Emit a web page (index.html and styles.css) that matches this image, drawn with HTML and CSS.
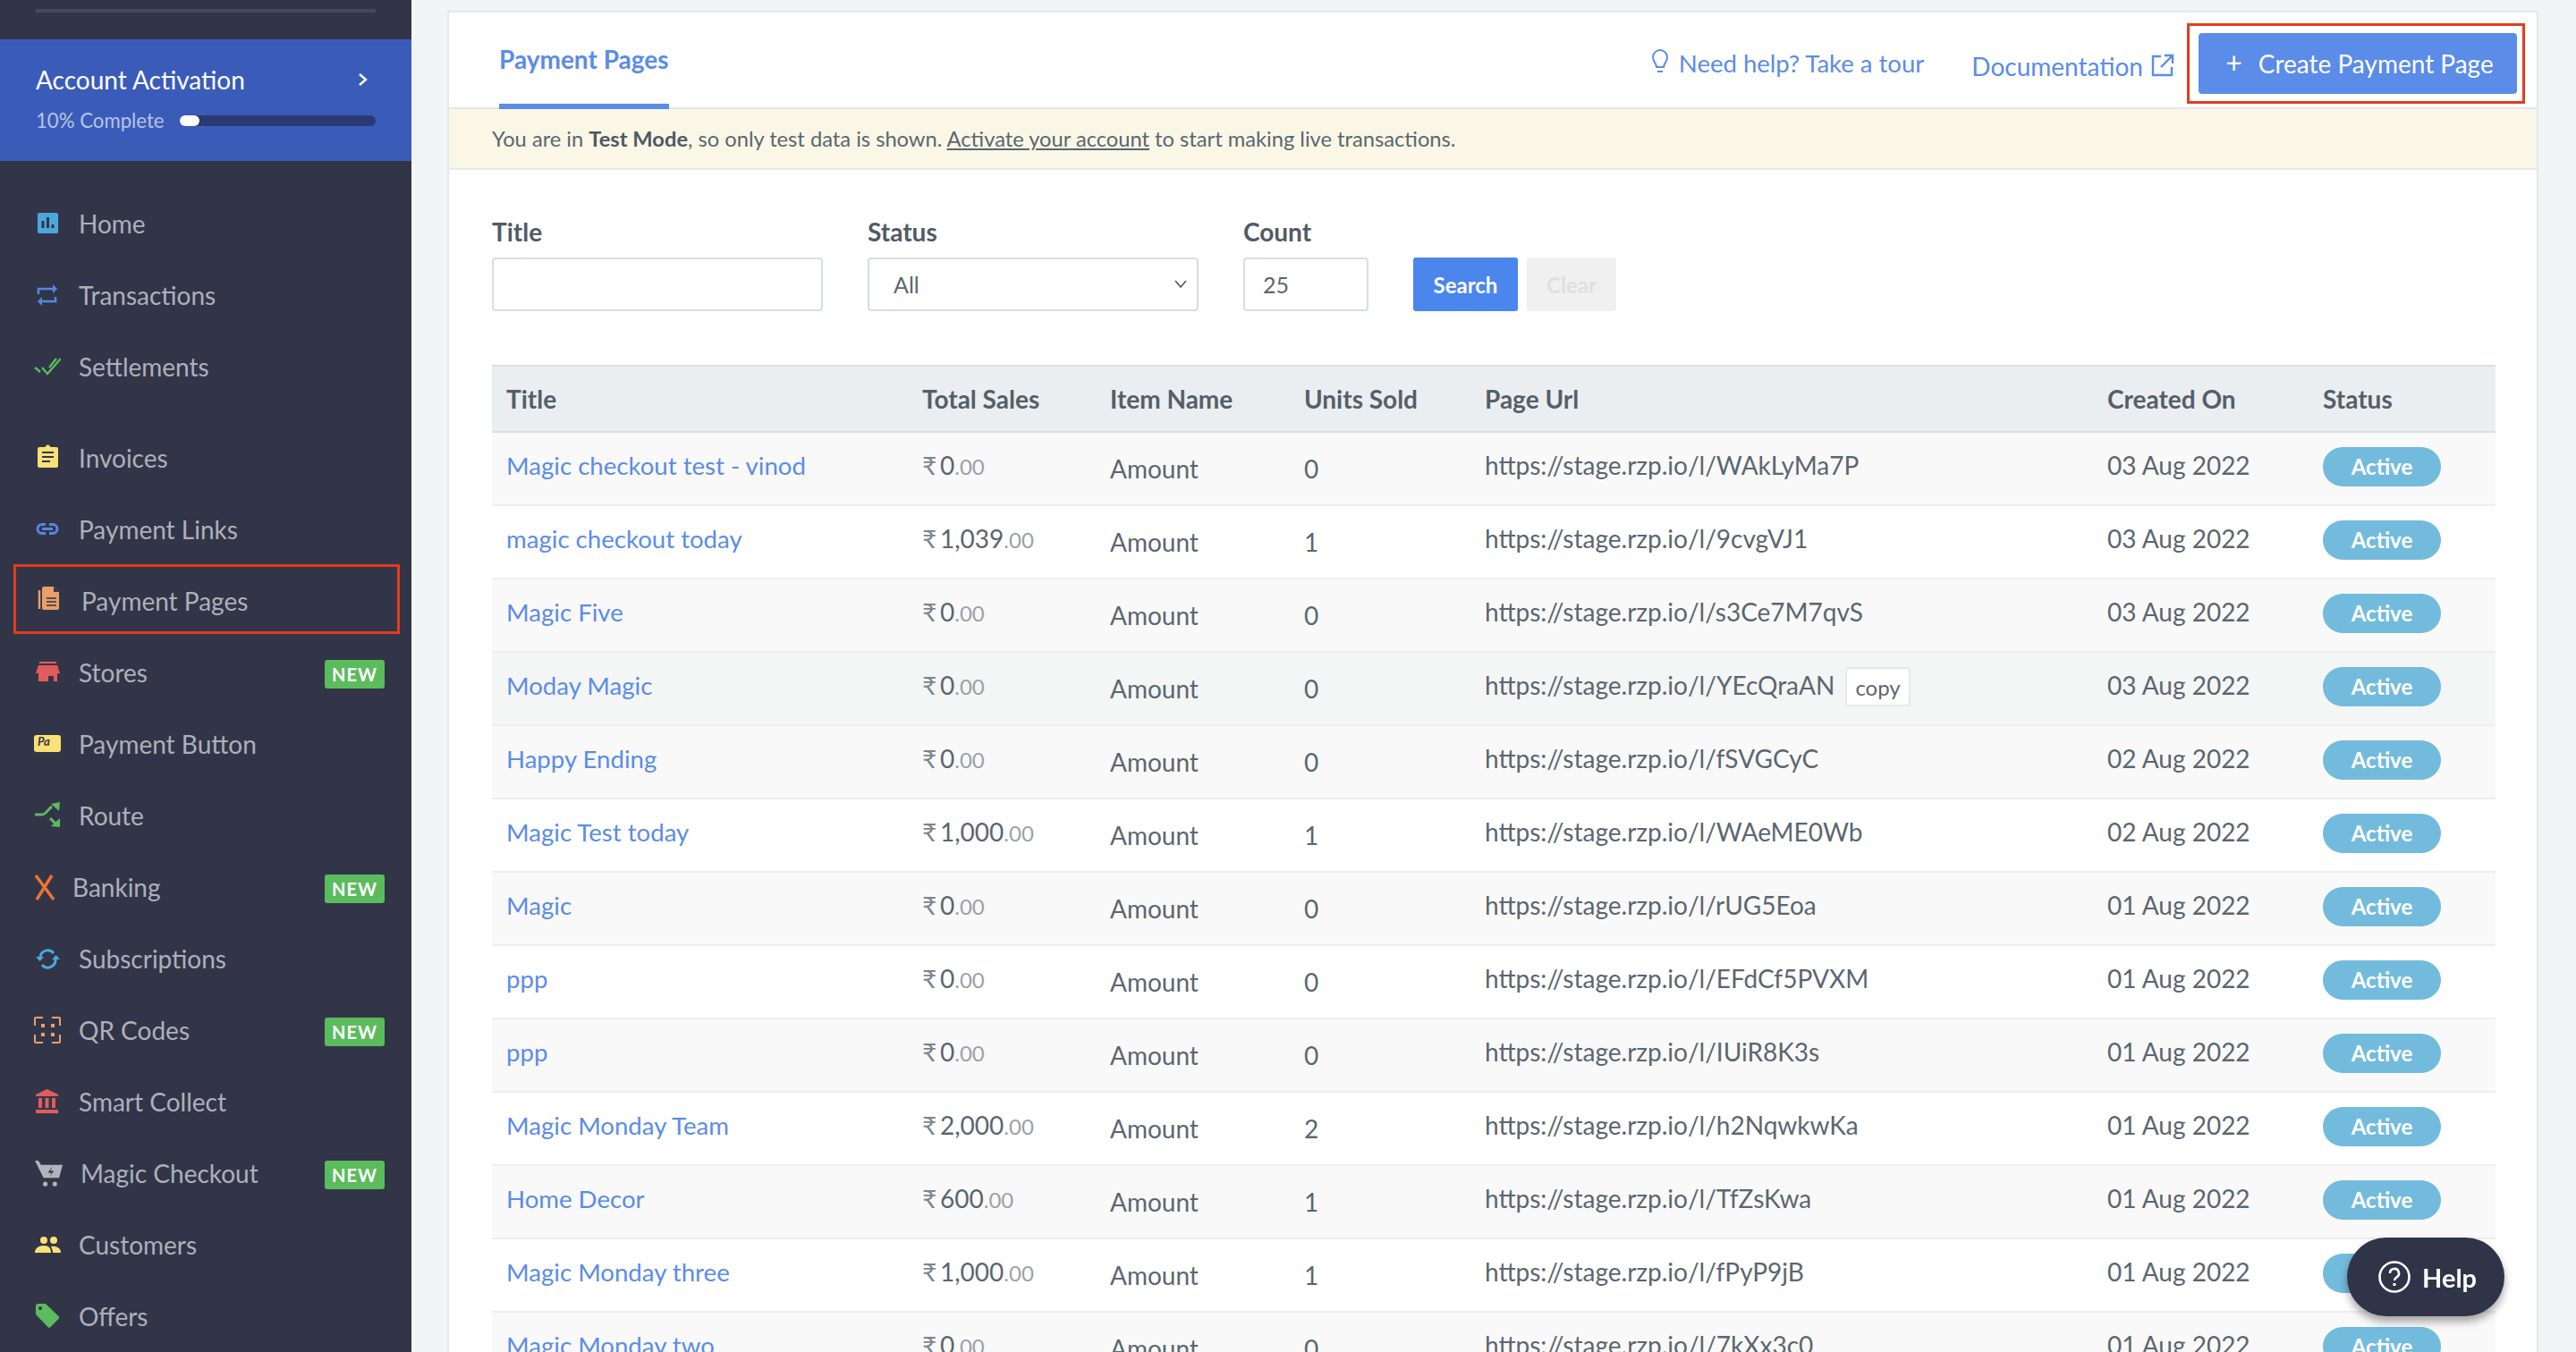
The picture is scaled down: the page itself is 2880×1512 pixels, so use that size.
FILE: index.html

```html
<!DOCTYPE html>
<html lang="en">
<head>
  <meta charset="UTF-8" />
  <title>Payment Pages</title>
  <link rel="stylesheet" href="styles.css">
</head>
<body>
  <div class="app">
    <aside class="sidebar">
      <div class="top-line"></div>
      <div class="activation">
        <div class="act-head">
          <span>Account Activation</span>
          <svg class="chev" viewBox="0 0 12 16" width="12" height="16"><path d="M2 2l7 6-7 6" fill="none" stroke="#fff" stroke-width="2.400"/></svg>
        </div>
        <div class="act-prog">
          <span>10% Complete</span>
          <div class="bar"><div class="bar-fill"></div></div>
        </div>
      </div>
      <nav class="nav">
        <a class="item">
          <svg class="ic" viewBox="0 0 30 30"><rect x="4" y="3" width="23" height="23" rx="2" fill="#4aa8dc"/><path d="M10 20v-8M15.500 20V8M21 20v-4" stroke="#323548" stroke-width="3"/></svg>
          Home
        </a>
        <a class="item">
          <svg class="ic" viewBox="0 0 30 30"><path d="M5 14V8h17M24 17v5H7" fill="none" stroke="#5587e0" stroke-width="2.600"/><path d="M21 3l5 5-5 5zM9 17l-5 5 5 5z" fill="#5587e0"/></svg>
          Transactions
        </a>
        <a class="item group-end">
          <svg class="ic" viewBox="0 0 30 30"><path d="M1 16l6 5M9 16l6 7L30 6M17 16l8-10" fill="none" stroke="#5cbb5c" stroke-width="2.400"/></svg>
          Settlements
        </a>
        <a class="item">
          <svg class="ic" viewBox="0 0 30 30"><path d="M6 3h6l3.500-3L19 3h6a2 2 0 0 1 2 2v19a2 2 0 0 1-2 2H6a2 2 0 0 1-2-2V5a2 2 0 0 1 2-2z" fill="#fbe076"/><path d="M9 9h13M9 14h13M9 19h9" stroke="#323548" stroke-width="2.200"/></svg>
          Invoices
        </a>
        <a class="item">
          <svg class="ic" viewBox="0 0 30 30"><path d="M13 9.500H9a5 5 0 0 0 0 10h4M17 9.500h4a5 5 0 0 1 0 10h-4M9 14.500h12" fill="none" stroke="#5587e0" stroke-width="3"/></svg>
          Payment Links
        </a>
        <a class="item current">
          <svg class="ic" viewBox="0 0 30 30"><path d="M6 5v21" stroke="#e89f68" stroke-width="2.400"/><path d="M11 1h11l6 6v18a2 2 0 0 1-2 2H11a2 2 0 0 1-2-2V3a2 2 0 0 1 2-2z" fill="#e89f68"/><path d="M22 1v6h6z" fill="#323548"/><path d="M14 14h11M14 18h11M14 22h11" stroke="#323548" stroke-width="1.500"/></svg>
          Payment Pages
        </a>
        <a class="item">
          <svg class="ic" viewBox="0 0 30 30"><path d="M6 3h19v2H6zM5 7h21l3 9H2z" fill="#e25c5c"/><path d="M5 16h21v9h-4v-6h-6v6H5z" fill="#e25c5c"/></svg>
          Stores<b class="new">NEW</b>
        </a>
        <a class="item">
          <svg class="ic" viewBox="0 0 30 30"><rect x="0" y="5" width="30" height="19" rx="3" fill="#fbe076"/><text x="4" y="17" class="ic-text">Pa</text></svg>
          Payment Button
        </a>
        <a class="item">
          <svg class="ic" viewBox="0 0 30 30"><path d="M1 14h8c4 0 6-5 11-9M18 18l6 6" fill="none" stroke="#5cbb5c" stroke-width="3"/><path d="M19 2l10-2-1 10zM29 18v10l-10-1z" fill="#5cbb5c"/></svg>
          Route
        </a>
        <a class="item banking">
          <svg class="ic" viewBox="0 0 30 30"><path d="M2 2l20 27M20 2L3 29" fill="none" stroke="#ef7430" stroke-width="3.400"/></svg>
          Banking<b class="new">NEW</b>
        </a>
        <a class="item">
          <svg class="ic" viewBox="0 0 30 30"><path d="M7 13a8.500 8.500 0 0 1 15-4M24 16a8.500 8.500 0 0 1-15 6" fill="none" stroke="#4aa8dc" stroke-width="3"/><path d="M2 13h9l-4.500 5zM20 16h9l-4.500-5z" fill="#4aa8dc"/></svg>
          Subscriptions
        </a>
        <a class="item">
          <svg class="ic" viewBox="0 0 30 30"><path d="M10 1H2a1 1 0 0 0-1 1v8M20 1h8a1 1 0 0 1 1 1v8M10 29H2a1 1 0 0 1-1-1v-8M20 29h8a1 1 0 0 0 1-1v-8" fill="none" stroke="#e89f68" stroke-width="2"/><path d="M8 8h4v4H8zM19 8h4v4h-4zM8 18h4v4H8zM19 18h4v4h-4z" fill="#e89f68"/></svg>
          QR Codes<b class="new">NEW</b>
        </a>
        <a class="item">
          <svg class="ic" viewBox="0 0 30 30"><path d="M14.500 1L27 7v2H2V7zM2 24h25v4H2z" fill="#e25c5c"/><path d="M5 11h4v11H5zM12.500 11h4v11h-4zM20 11h4v11h-4z" fill="#e25c5c"/></svg>
          Smart Collect
        </a>
        <a class="item magic">
          <svg class="ic ic-cart" viewBox="0 0 34 32"><path d="M1 1h4l3 5h25l-4 15H11z" fill="#b2b4bd"/><circle cx="13" cy="28" r="2.600" fill="#b2b4bd"/><circle cx="24" cy="28" r="2.600" fill="#b2b4bd"/><path d="M21 8l-5 7h4l-2 4 5-6h-4z" fill="#323548"/></svg>
          Magic Checkout<b class="new">NEW</b>
        </a>
        <a class="item">
          <svg class="ic" viewBox="0 0 30 30"><circle cx="11" cy="10" r="4" fill="#fbe076"/><circle cx="22" cy="10" r="4" fill="#fbe076"/><path d="M1 24c0-5 4-8 10-8s8 3 8 8zM21 24c0-3-1-5-2-7 5-1 11 1 11 7z" fill="#fbe076"/></svg>
          Customers
        </a>
        <a class="item">
          <svg class="ic" viewBox="0 0 30 30"><path d="M5 1h7a3 3 0 0 1 2 1l13.500 13a2 2 0 0 1 0 3l-9 9a2 2 0 0 1-3 0L3 14a3 3 0 0 1-1-2V4a3 3 0 0 1 3-3z" fill="#5cbb5c"/><circle cx="7" cy="6" r="2" fill="#323548"/></svg>
          Offers
        </a>
      </nav>
    </aside>

    <main class="main">
      <div class="card">
        <div class="tabs">
          <div class="tab">Payment Pages</div>
          <div class="tab-actions">
            <a class="link tour">
              <svg class="bulb" viewBox="0 0 20 28" width="20" height="28"><path d="M6 20c0-4-4-6-4-11a8 8 0 0 1 16 0c0 5-4 7-4 11zM7 25h6" fill="none" stroke="#5b8ce8" stroke-width="2"/></svg>
              Need help? Take a tour
            </a>
            <a class="link docs">
              Documentation
              <svg class="ext" viewBox="0 0 26 26" width="26" height="26"><path d="M11 3H2v21h21v-9M15 2h9v9M24 2L11 15" fill="none" stroke="#5b8ce8" stroke-width="2.400"/></svg>
            </a>
            <div class="create-box"><button class="create"><span class="plus">+</span>Create Payment Page</button></div>
          </div>
        </div>
        <div class="notice">You are in <b>Test Mode</b>, so only test data is shown. <u>Activate your account</u> to start making live transactions.</div>
        <div class="body">
          <form class="filters">
            <label class="f">Title<input class="inp w-title"></label>
            <label class="f">Status<select class="inp w-title sel"><option>All</option></select></label>
            <label class="f">Count<input class="inp w-count" value="25"></label>
            <button type="button" class="btn-search">Search</button>
            <button type="button" class="btn-clear">Clear</button>
          </form>
          <table class="tbl">
            <colgroup><col class="c1"><col class="c2"><col class="c3"><col class="c4"><col class="c5"><col class="c6"><col class="c7"></colgroup>
            <thead><tr><th>Title</th><th>Total Sales</th><th>Item Name</th><th>Units Sold</th><th>Page Url</th><th>Created On</th><th>Status</th></tr></thead>
            <tbody>
              <tr><td class="t">Magic checkout test - vinod</td><td><span class="rs">₹</span>0<small>.00</small></td><td class="low">Amount</td><td class="low">0</td><td>https://stage.rzp.io/l/WAkLyMa7P</td><td>03 Aug 2022</td><td class="st"><span class="pill">Active</span></td></tr>
              <tr><td class="t">magic checkout today</td><td><span class="rs">₹</span>1,039<small>.00</small></td><td class="low">Amount</td><td class="low">1</td><td>https://stage.rzp.io/l/9cvgVJ1</td><td>03 Aug 2022</td><td class="st"><span class="pill">Active</span></td></tr>
              <tr><td class="t">Magic Five</td><td><span class="rs">₹</span>0<small>.00</small></td><td class="low">Amount</td><td class="low">0</td><td>https://stage.rzp.io/l/s3Ce7M7qvS</td><td>03 Aug 2022</td><td class="st"><span class="pill">Active</span></td></tr>
              <tr class="hover"><td class="t">Moday Magic</td><td><span class="rs">₹</span>0<small>.00</small></td><td class="low">Amount</td><td class="low">0</td><td>https://stage.rzp.io/l/YEcQraAN<span class="copy">copy</span></td><td>03 Aug 2022</td><td class="st"><span class="pill">Active</span></td></tr>
              <tr><td class="t">Happy Ending</td><td><span class="rs">₹</span>0<small>.00</small></td><td class="low">Amount</td><td class="low">0</td><td>https://stage.rzp.io/l/fSVGCyC</td><td>02 Aug 2022</td><td class="st"><span class="pill">Active</span></td></tr>
              <tr><td class="t">Magic Test today</td><td><span class="rs">₹</span>1,000<small>.00</small></td><td class="low">Amount</td><td class="low">1</td><td>https://stage.rzp.io/l/WAeME0Wb</td><td>02 Aug 2022</td><td class="st"><span class="pill">Active</span></td></tr>
              <tr><td class="t">Magic</td><td><span class="rs">₹</span>0<small>.00</small></td><td class="low">Amount</td><td class="low">0</td><td>https://stage.rzp.io/l/rUG5Eoa</td><td>01 Aug 2022</td><td class="st"><span class="pill">Active</span></td></tr>
              <tr><td class="t">ppp</td><td><span class="rs">₹</span>0<small>.00</small></td><td class="low">Amount</td><td class="low">0</td><td>https://stage.rzp.io/l/EFdCf5PVXM</td><td>01 Aug 2022</td><td class="st"><span class="pill">Active</span></td></tr>
              <tr><td class="t">ppp</td><td><span class="rs">₹</span>0<small>.00</small></td><td class="low">Amount</td><td class="low">0</td><td>https://stage.rzp.io/l/IUiR8K3s</td><td>01 Aug 2022</td><td class="st"><span class="pill">Active</span></td></tr>
              <tr><td class="t">Magic Monday Team</td><td><span class="rs">₹</span>2,000<small>.00</small></td><td class="low">Amount</td><td class="low">2</td><td>https://stage.rzp.io/l/h2NqwkwKa</td><td>01 Aug 2022</td><td class="st"><span class="pill">Active</span></td></tr>
              <tr><td class="t">Home Decor</td><td><span class="rs">₹</span>600<small>.00</small></td><td class="low">Amount</td><td class="low">1</td><td>https://stage.rzp.io/l/TfZsKwa</td><td>01 Aug 2022</td><td class="st"><span class="pill">Active</span></td></tr>
              <tr><td class="t">Magic Monday three</td><td><span class="rs">₹</span>1,000<small>.00</small></td><td class="low">Amount</td><td class="low">1</td><td>https://stage.rzp.io/l/fPyP9jB</td><td>01 Aug 2022</td><td class="st"><span class="pill">Active</span></td></tr>
              <tr><td class="t">Magic Monday two</td><td><span class="rs">₹</span>0<small>.00</small></td><td class="low">Amount</td><td class="low">0</td><td>https://stage.rzp.io/l/7kXx3c0</td><td>01 Aug 2022</td><td class="st"><span class="pill">Active</span></td></tr>
            </tbody>
          </table>
        </div>
      </div>
    </main>
  </div>

  <div class="help">
    <svg viewBox="0 0 38 38" width="38" height="38"><circle cx="19" cy="19" r="16.500" fill="none" stroke="#fff" stroke-width="2.600"/><path d="M14 15a5 5 0 1 1 7.500 4.300c-1.700 1-2.500 1.700-2.500 3.700" fill="none" stroke="#fff" stroke-width="2.600"/><circle cx="19" cy="27.500" r="1.800" fill="#fff"/></svg>
    Help
  </div>
</body>
</html>
```

FILE: styles.css

```css
body { margin: 0; font-family: Lato, sans-serif; font-size: 28px; color: #5b6670; }
.app { display: flex; height: 1512px; overflow: hidden; background: #f3f4f6; }

/* sidebar */
.sidebar { width: 460px; flex: none; background: #323548; color: #adb0ba; }
.top-line { height: 4px; margin: 10px 40px 30px; background: #474a5c; }
.activation { height: 136px; box-sizing: border-box; padding: 28px 40px 0; background: #3a5cb8; color: #fff; }
.act-head { display: flex; justify-content: space-between; align-items: center; padding-right: 8px; }
.act-prog { display: flex; align-items: center; gap: 17px; margin-top: 15px; font-size: 22.200px; color: #b7c4e6; }
.bar { flex: 1; height: 12px; border-radius: 6px; background: #2b3a75; }
.bar-fill { width: 22px; height: 12px; border-radius: 6px; background: #fff; }
.nav { padding-top: 30px; }
.item { display: flex; align-items: center; height: 80px; box-sizing: border-box; padding: 0 30px 0 38px; }
.item.group-end { margin-bottom: 22px; }
.item.current { height: 78px; margin: -1px 13px 3px 15px; padding: 4px 0 0 20px; border: 3px solid #e23d1e; }
.item.current .ic { margin: -5px 23px 0 0; }
.item.banking .ic { margin-right: 13px; }
.ic { width: 30px; height: 30px; margin-right: 20px; flex: none; }
.ic-cart { width: 33px; height: 31px; margin-right: 19px; }
.ic-text { font-size: 13px; font-weight: 700; font-style: italic; fill: #323548; }
.new { margin: 4px 0 0 auto; padding: 0 8px; height: 32px; line-height: 33px; border-radius: 3px; background: #5cbb5c; color: #fff; font-size: 20px; letter-spacing: 1px; }

/* main card */
.main { flex: 1; padding: 12px 42px 0 40px; min-width: 0; }
.card { background: #fff; border: 2px solid #e5e8ea; border-bottom: 0; box-sizing: border-box; height: 1600px; }
.tabs { display: flex; justify-content: space-between; height: 106px; padding: 0 13px 0 56px; border-bottom: 2px solid #e5e8ea; }
.tab { height: 108px; box-sizing: border-box; padding-top: 35px; border-bottom: 6px solid #5b8ce8; color: #5b8ce8; font-weight: 700; }
.tab-actions { display: flex; align-items: center; }
.link { display: flex; align-items: center; color: #5b8ce8; }
.tour { margin-right: 53px; margin-top: 7px; font-size: 27.500px; }
.bulb { margin-right: 11px; margin-top: -4px; }
.docs { margin-right: 14px; margin-top: 13px; }
.ext { margin-left: 9px; margin-top: -1px; }
.create-box { padding: 8px 6px 8px 10px; border: 3px solid #e23d1e; margin-top: 8px; }
.create { display: block; width: 356px; height: 68px; padding: 0 0 0 4px; border: 0; border-radius: 4px; background: #5b8ce8; color: #fff; font: 28px Lato, sans-serif; }
.plus { margin-right: 18px; font-size: 32px; line-height: 28px; }
.notice { height: 66px; line-height: 66px; padding-left: 48px; background: #faf7e6; border-bottom: 2px solid #e5e8ea; font-size: 23.700px; }
.notice b { color: #4f5963; }
.body { padding: 0 48px; }

/* filters */
.filters { display: flex; align-items: flex-end; height: 158px; box-sizing: border-box; }
.f { display: flex; flex-direction: column; gap: 12px; margin-right: 50px; font-weight: 700; color: #515b65; }
.inp { height: 60px; box-sizing: border-box; border: 2px solid #d5dfdf; border-radius: 4px; background: #fff; padding: 0 27px; font: 25px Lato, sans-serif; color: #5b6670; }
.sel { appearance: none; padding-left: 27px; background: url("data:image/svg+xml,%3Csvg xmlns='http://www.w3.org/2000/svg' width='14' height='10'%3E%3Cpath d='M1 1l6 7 6-7' fill='none' stroke='%23555' stroke-width='1.600'/%3E%3C/svg%3E") no-repeat right 11px center #fff; }
.w-title { width: 370px; }
.w-count { width: 140px; padding-left: 20px; }
.btn-search, .btn-clear { height: 60px; border: 0; border-radius: 3px; font: 700 24px Lato, sans-serif; color: #fff; }
.btn-search { width: 117px; margin-right: 10px; background: #4a86ec; }
.btn-clear { width: 100px; background: #f0f0f0; color: #dfdfdf; }

/* table */
.tbl { width: 2240px; margin-top: 60px; border-collapse: collapse; table-layout: fixed; }
.c1 { width: 465px; } .c2 { width: 210px; } .c3 { width: 217px; } .c4 { width: 202px; }
.c5 { width: 696px; } .c6 { width: 241px; } .c7 { width: 209px; }
th { height: 74px; box-sizing: border-box; padding: 0 0 0 16px; text-align: left; background: #ebeef0; border-top: 2px solid #dcdfe1; border-bottom: 2px solid #dcdfe1; font-weight: 700; color: #555f69; }
td { height: 82px; box-sizing: border-box; padding: 0 0 8px 16px; border-bottom: 2px solid #ecefef; white-space: nowrap; }
td.low { padding-bottom: 0; }
td.st { padding-bottom: 4px; }
tbody tr:nth-child(odd) { background: #f9f9f9; }
tbody tr.hover { background: #f4f5f5; }
.t { color: #5b8ce8; font-size: 27.600px; }
.rs { display: inline-block; width: 20px; color: #7c858e; }
small { font-size: 24px; color: #9aa1a8; }
.copy { display: inline-block; box-sizing: border-box; height: 44px; margin: -12px 0 -12px 12px; padding: 0 9px; line-height: 42px; border: 2px solid #e6e8ea; border-radius: 4px; font-size: 24px; background: #fff; vertical-align: -1px; }
.pill { display: inline-block; width: 132px; height: 44px; line-height: 44px; border-radius: 22px; background: #73bbdc; color: #fff; font-size: 24px; font-weight: 700; text-align: center; vertical-align: middle; }

/* floating help */
.help { position: fixed; left: 2624px; top: 1384px; display: flex; align-items: center; gap: 12px; width: 176px; height: 88px; box-sizing: border-box; padding-left: 34px; border-radius: 44px; background: #303448; color: #fff; font-size: 29px; font-weight: 700; box-shadow: 0 6px 10px rgba(0,0,0,.35); }
```
